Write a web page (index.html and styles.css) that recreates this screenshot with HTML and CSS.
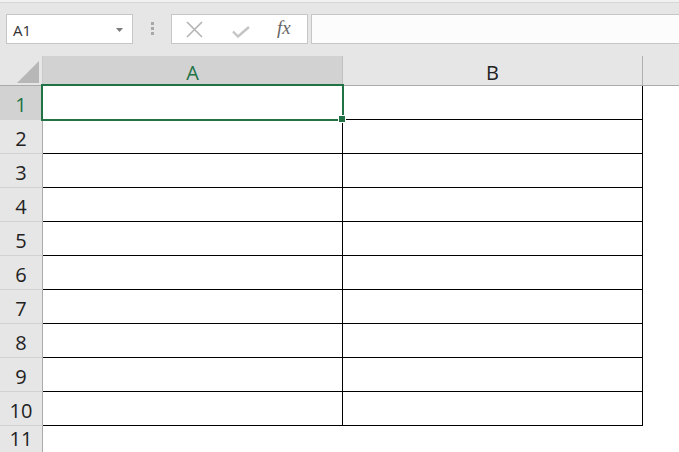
FILE: index.html
```html
<!DOCTYPE html>
<html lang="en">
<head>
<meta charset="utf-8">
<title>Sheet</title>
<link rel="stylesheet" href="styles.css">
</head>
<body>
<div class="app">
  <div class="top-edge"></div>
  <div class="toolbar">
    <div class="namebox">
      <span class="namebox-text">A1</span>
      <svg class="dropdown" width="8" height="5" viewBox="0 0 8 5"><path d="M0 0H7L3.5 4Z" fill="#7a7a7a"/></svg>
    </div>
    <div class="grip"><span></span><span></span><span></span></div>
    <div class="fbuttons">
      <svg class="ico ico-x" width="17" height="17" viewBox="0 0 17 17"><path d="M1 1L16 16M16 1L1 16" stroke="#b4b4b4" stroke-width="1.6" fill="none"/></svg>
      <svg class="ico ico-check" width="18" height="12" viewBox="0 0 18 12"><path d="M1 5.5L6 10.5L17 1" stroke="#c4c4c4" stroke-width="2.4" fill="none"/></svg>
      <span class="fx">fx</span>
    </div>
    <div class="formula"></div>
  </div>

  <div class="sheet">
    <div class="corner"><span class="corner-tri"></span></div>
    <div class="colhead colhead-sel">A</div>
    <div class="colhead colhead-b">B</div>
    <div class="colhead colhead-rest"></div>

    <div class="rowhead rowhead-sel">1</div>
    <div class="cell cell-a cell-active"><span class="selection"></span><span class="fill-handle"></span></div>
    <div class="cell cell-b"></div>
    <div class="cell cell-rest"></div>

    <div class="rowhead">2</div><div class="cell cell-a"></div><div class="cell cell-b"></div><div class="cell cell-rest"></div>
    <div class="rowhead">3</div><div class="cell cell-a"></div><div class="cell cell-b"></div><div class="cell cell-rest"></div>
    <div class="rowhead">4</div><div class="cell cell-a"></div><div class="cell cell-b"></div><div class="cell cell-rest"></div>
    <div class="rowhead">5</div><div class="cell cell-a"></div><div class="cell cell-b"></div><div class="cell cell-rest"></div>
    <div class="rowhead">6</div><div class="cell cell-a"></div><div class="cell cell-b"></div><div class="cell cell-rest"></div>
    <div class="rowhead">7</div><div class="cell cell-a"></div><div class="cell cell-b"></div><div class="cell cell-rest"></div>
    <div class="rowhead">8</div><div class="cell cell-a"></div><div class="cell cell-b"></div><div class="cell cell-rest"></div>
    <div class="rowhead">9</div><div class="cell cell-a"></div><div class="cell cell-b"></div><div class="cell cell-rest"></div>
    <div class="rowhead">10</div><div class="cell cell-a"></div><div class="cell cell-b"></div><div class="cell cell-rest"></div>

    <div class="rowhead rowhead-last">11</div><div class="cell cell-plain"></div><div class="cell cell-plain"></div><div class="cell cell-plain"></div>
  </div>
</div>
</body>
</html>
```

FILE: styles.css
```css
* { box-sizing: border-box; }

html, body {
  margin: 0;
  padding: 0;
  width: 679px;
  height: 452px;
  overflow: hidden;
  background: #e6e6e6;
  font-family: "Open Sans", "Noto Sans", "Liberation Sans", sans-serif;
}

.app {
  display: flex;
  flex-direction: column;
  width: 679px;
  height: 452px;
  overflow: hidden;
}

.top-edge {
  height: 3px;
  background: #f1f1f1;
  border-bottom: 1px solid #d6d6d6;
  flex: none;
}

.toolbar {
  display: flex;
  align-items: flex-start;
  height: 53px;
  padding: 11px 0 0 6px;
  flex: none;
}

.namebox {
  width: 127px;
  height: 30px;
  background: #ffffff;
  border: 1px solid #c6c6c6;
  display: flex;
  align-items: center;
  justify-content: space-between;
  padding: 0 8px 0 6px;
}

.namebox-text {
  font-size: 15px;
  color: #333333;
  padding-top: 1px;
}

.dropdown { margin-top: 2px; }

.grip {
  width: 38px;
  height: 30px;
  display: flex;
  flex-direction: column;
  align-items: center;
  padding-top: 8px;
  gap: 2px;
}

.grip span {
  width: 3px;
  height: 3px;
  background: #a8a8a8;
}

.fbuttons {
  width: 137px;
  height: 30px;
  background: #ffffff;
  border: 1px solid #c6c6c6;
  display: flex;
  align-items: center;
  padding-left: 14px;
}

.ico-check { margin-left: 29px; margin-top: 6px; }

.fx {
  margin-left: 27px;
  font-family: "Liberation Serif", "DejaVu Serif", serif;
  font-style: italic;
  font-size: 19px;
  color: #666666;
  margin-top: -2px;
}

.formula {
  flex: 1;
  height: 30px;
  margin-left: 3px;
  margin-right: -6px;
  background: #fcfcfc;
  border: 1px solid #c6c6c6;
}

.sheet {
  flex: 1;
  display: grid;
  grid-template-columns: 43px 300px 300px 1fr;
  grid-template-rows: 30px repeat(10, 34px) 1fr;
  background: #ffffff;
}

.corner {
  position: relative;
  background: #e6e6e6;
  border-right: 1px solid #c8c8c8;
  border-bottom: 1px solid #ababab;
}

.corner-tri {
  position: absolute;
  right: 3px;
  bottom: 2px;
  width: 0;
  height: 0;
  border-left: 22px solid transparent;
  border-bottom: 22px solid #b7b7b7;
}

.colhead {
  background: #e6e6e6;
  border-bottom: 1px solid #ababab;
  border-right: 1px solid #c4c4c4;
  display: flex;
  align-items: center;
  justify-content: center;
  font-size: 20px;
  color: #222222;
  padding-top: 3px;
}

.colhead-sel {
  background: #d2d2d2;
  color: #217346;
  border-right-color: #c0c0c0;
}

.colhead-b { border-right-color: #b0b0b0; }
.colhead-rest { border-right: none; }

.rowhead {
  background: #e6e6e6;
  border-right: 1px solid #ababab;
  border-bottom: 1px solid #d2d2d2;
  display: flex;
  align-items: center;
  justify-content: center;
  font-size: 20px;
  color: #222222;
  padding-top: 4px;
}

.rowhead-sel {
  background: #d2d2d2;
  color: #217346;
}

.rowhead-last {
  border-bottom: none;
  align-items: flex-start;
  padding-top: 0;
  line-height: 26px;
}

.cell { background: #ffffff; }

.cell-a, .cell-b {
  border-right: 1px solid #000000;
  border-bottom: 1px solid #000000;
}

.cell-active { position: relative; }

.selection {
  position: absolute;
  top: -2px;
  left: -2px;
  right: -2px;
  bottom: -2px;
  border: 2px solid #217346;
  pointer-events: none;
}

.fill-handle {
  position: absolute;
  left: 296px;
  top: 30px;
  width: 6px;
  height: 6px;
  background: #217346;
  outline: 1px solid #ffffff;
}
```
